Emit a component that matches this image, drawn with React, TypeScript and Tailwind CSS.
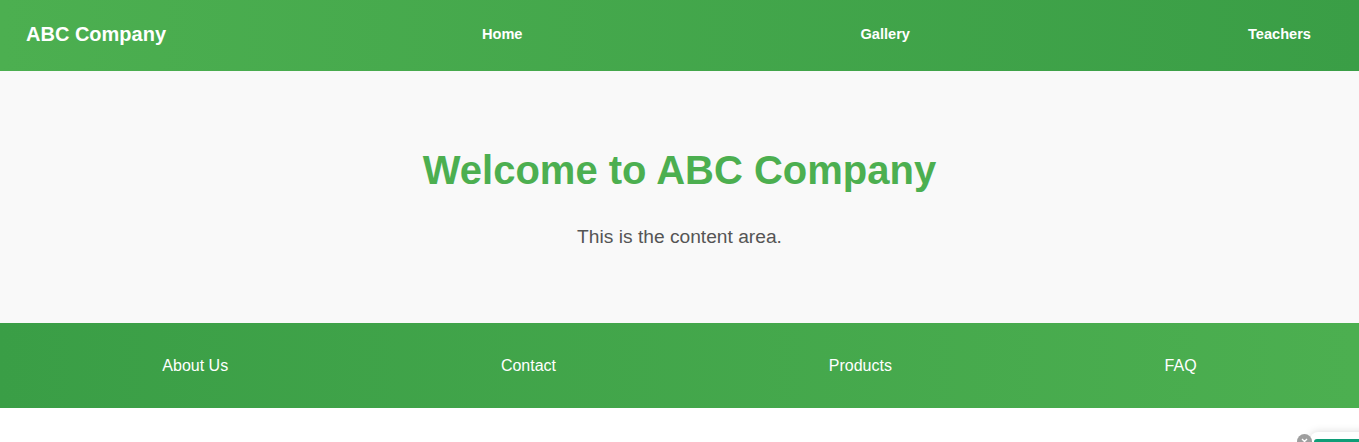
import React from "react";

export default function App() {
  const font = { fontFamily: '"Liberation Sans", Arial, sans-serif' };
  return (
    <div className="relative min-h-[442px] bg-white overflow-hidden" style={font}>
      <header className="flex h-[71px] items-center bg-linear-to-r from-[#4caf50] to-[#3a9e46] pb-[3px] pl-[26px] pr-[48px] text-white">
        <div className="text-[20px] font-bold leading-none">ABC Company</div>
        <nav className="ml-auto flex gap-[338px] text-[14.6px] font-bold leading-none">
          <a>Home</a>
          <a>Gallery</a>
          <a>Teachers</a>
        </nav>
      </header>
      <main className="flex h-[252px] flex-col items-center bg-[#f9f9f9] pt-[79px]">
        <h1 className="text-[40px] font-bold leading-[40px] text-[#4caf50]">Welcome to ABC Company</h1>
        <p className="mt-[35px] text-[19.2px] leading-[24px] text-[#555555]">This is the content area.</p>
      </main>
      <footer className="flex h-[85px] items-center justify-around bg-linear-to-r from-[#3a9e46] to-[#4caf50] pl-[26px] pr-[26px] text-[16px] leading-none text-white">
        <a>About Us</a>
        <a>Contact</a>
        <a>Products</a>
        <a>FAQ</a>
      </footer>
      <div className="absolute left-[1310px] top-[432px] h-[40px] w-[80px] rounded-[8px] bg-white shadow-[0_0_8px_rgba(0,0,0,0.15)]">
        <div className="mx-[4px] mt-[7px] h-[4px] rounded-t-[3px] bg-[#0f9d77]" />
      </div>
      <div className="absolute left-[1297px] top-[434px] flex h-[15px] w-[15px] items-center justify-center rounded-full bg-[#9e9e9e]">
        <svg width="7" height="7" viewBox="0 0 7 7" fill="none" stroke="white" strokeWidth="1.4">
          <path d="M1 1L6 6M6 1L1 6" />
        </svg>
      </div>
    </div>
  );
}
